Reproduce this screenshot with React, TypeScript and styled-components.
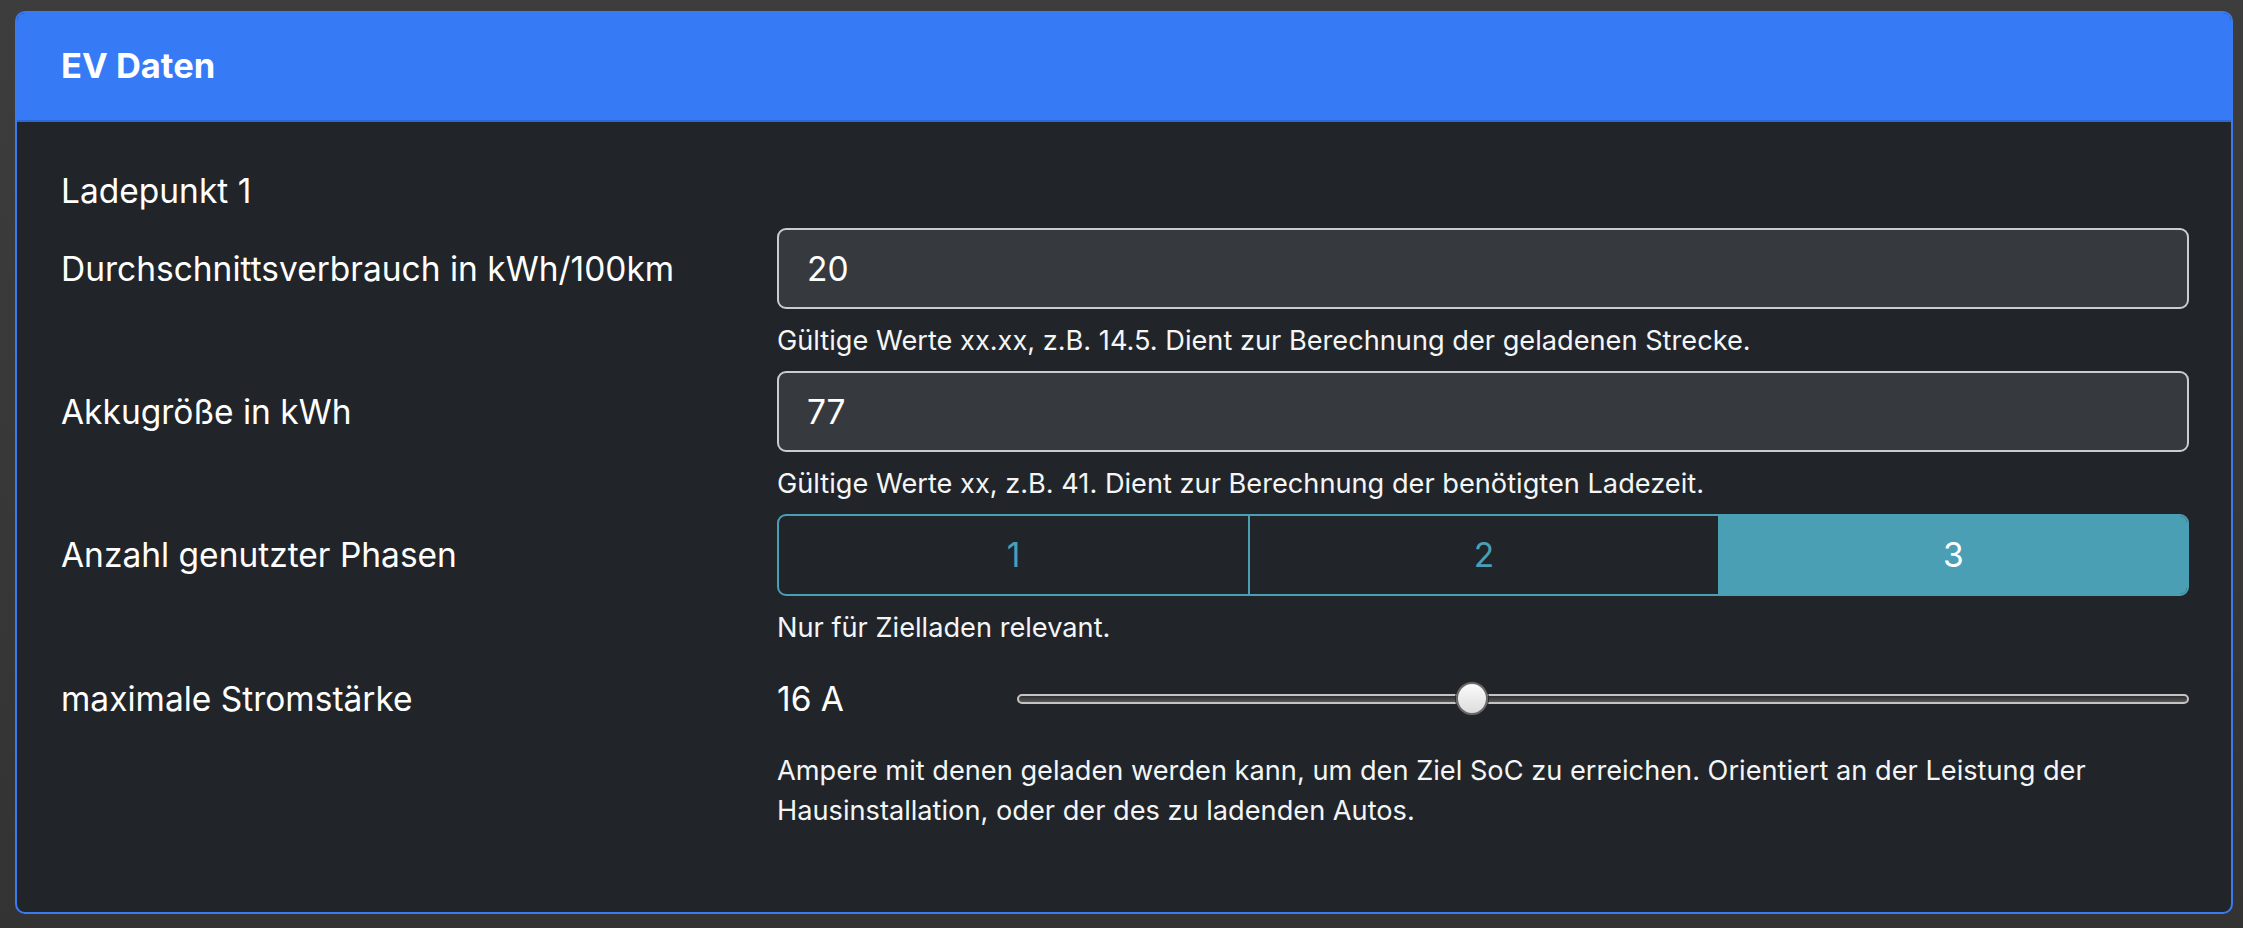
import styled, { createGlobalStyle } from 'styled-components'

const GlobalStyle = createGlobalStyle`
  html,
  body {
    margin: 0;
    background: linear-gradient(#3d3d3d, #333333);
  }

  body {
    padding: 11px 10px 14px 15px;
    font-family: Inter, 'Noto Sans', 'Liberation Sans', sans-serif;
    color: #ffffff;
  }
`

const CardStyled = styled.section`
  border: 2px solid #3a7bf0;
  border-radius: 10px;
  background: #212529;
  overflow: hidden;
`

const CardHeader = styled.header`
  padding: 29px 44px 30px;
  background: #367af6;
  border-bottom: 2px solid #2d68d4;
  font-size: 34.5px;
  font-weight: 700;
  line-height: 48px;
`

const CardBody = styled.div`
  padding: 45px 42px 81px 44px;
`

const SectionTitle = styled.div`
  font-size: 33.5px;
  line-height: 48px;
  margin-bottom: 13px;
`

const FieldRow = styled.div`
  display: grid;
  grid-template-columns: 1fr 2fr;
  column-gap: 10px;
  align-items: start;

  & + & {
    margin-top: 10px;
  }
`

const Label = styled.label`
  display: flex;
  align-items: center;
  height: 81px;
  font-size: 33.5px;
`

const TextInput = styled.input`
  box-sizing: border-box;
  width: 100%;
  height: 81px;
  padding: 0 28px;
  background: #363a3f;
  border: 2px solid #c9cdd1;
  border-radius: 9px;
  color: #ffffff;
  font-family: inherit;
  font-size: 33.5px;
  outline: none;
`

const HelpText = styled.div`
  margin-top: 12px;
  font-size: 27.2px;
  line-height: 40px;
  color: #f4f5f6;
`

const ButtonGroup = styled.div`
  display: grid;
  grid-template-columns: repeat(3, 1fr);
  height: 82px;
  border: 2px solid #4a9fb5;
  border-radius: 9px;
  overflow: hidden;
  box-sizing: border-box;
`

const PhaseButton = styled.button<{ $active?: boolean }>`
  border: none;
  border-left: 2px solid #4a9fb5;
  background: ${({ $active }) => ($active ? '#4a9fb5' : 'transparent')};
  color: ${({ $active }) => ($active ? '#ffffff' : '#4a9fb5')};
  font-family: inherit;
  font-size: 33.5px;
  cursor: pointer;

  &:first-child {
    border-left: none;
  }
`

const SliderRow = styled.div`
  display: grid;
  grid-template-columns: 240px 1fr;
  align-items: center;
  height: 81px;
`

const SliderValue = styled.span`
  font-size: 33.5px;
`

const Range = styled.input`
  -webkit-appearance: none;
  appearance: none;
  width: 100%;
  height: 36px;
  margin: 0;
  background: transparent;

  &::-webkit-slider-runnable-track {
    height: 10px;
    box-sizing: border-box;
    border: 2px solid #c4c4c4;
    border-radius: 5px;
    background: linear-gradient(#2e2e2e, #565656);
  }

  &::-webkit-slider-thumb {
    -webkit-appearance: none;
    width: 32px;
    height: 33px;
    margin-top: -13.5px;
    box-sizing: border-box;
    border: 2px solid #6a6a6a;
    border-radius: 50%;
    background: linear-gradient(#fbfbfb, #dcdcdc);
    box-shadow: 0 0 0 1px #2a2a2a;
  }
`

const phases = [1, 2, 3]

export default function App() {
  return (
    <>
      <GlobalStyle />
      <CardStyled>
        <CardHeader>EV Daten</CardHeader>
        <CardBody>
          <SectionTitle>Ladepunkt 1</SectionTitle>

          <FieldRow>
            <Label htmlFor="verbrauch">Durchschnittsverbrauch in kWh/100km</Label>
            <div>
              <TextInput id="verbrauch" type="text" defaultValue="20" />
              <HelpText>Gültige Werte xx.xx, z.B. 14.5. Dient zur Berechnung der geladenen Strecke.</HelpText>
            </div>
          </FieldRow>

          <FieldRow>
            <Label htmlFor="akku">Akkugröße in kWh</Label>
            <div>
              <TextInput id="akku" type="text" defaultValue="77" />
              <HelpText>Gültige Werte xx, z.B. 41. Dient zur Berechnung der benötigten Ladezeit.</HelpText>
            </div>
          </FieldRow>

          <FieldRow>
            <Label>Anzahl genutzter Phasen</Label>
            <div>
              <ButtonGroup>
                {phases.map((p) => (
                  <PhaseButton key={p} type="button" $active={p === 3}>
                    {p}
                  </PhaseButton>
                ))}
              </ButtonGroup>
              <HelpText>Nur für Zielladen relevant.</HelpText>
            </div>
          </FieldRow>

          <FieldRow>
            <Label htmlFor="strom">maximale Stromstärke</Label>
            <div>
              <SliderRow>
                <SliderValue>16 A</SliderValue>
                <Range id="strom" type="range" min={6} max={32} step={1} defaultValue={16} />
              </SliderRow>
              <HelpText>
                Ampere mit denen geladen werden kann, um den Ziel SoC zu erreichen. Orientiert an der Leistung der
                Hausinstallation, oder der des zu ladenden Autos.
              </HelpText>
            </div>
          </FieldRow>
        </CardBody>
      </CardStyled>
    </>
  )
}
